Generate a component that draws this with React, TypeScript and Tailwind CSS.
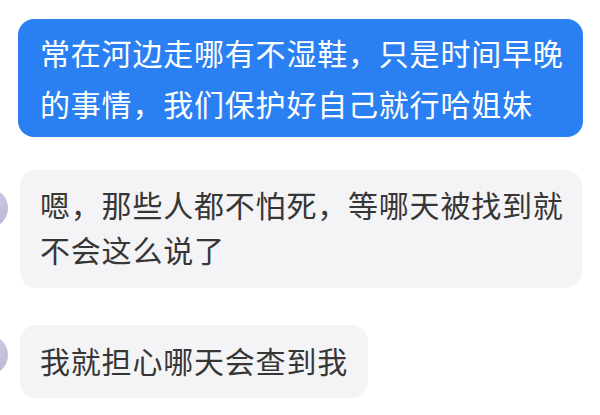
import React from "react";

function Avatar({ top }: { top: string }) {
  return (
    <div
      className={`w-[40px] h-[40px] shrink-0 rounded-full ml-[-32px] bg-gradient-to-br from-[#dcd8ec] to-[#b9b4d4] ${top}`}
    />
  );
}

export default function App() {
  return (
    <div
      className="w-[600px] h-[415px] bg-white overflow-hidden flex flex-col pt-[19px]"
      style={{ fontFamily: '"Noto Sans CJK SC", "Noto Sans", sans-serif' }}
    >
      <div className="ml-[18px] w-[565px] h-[118px] rounded-[16px] bg-[#2a7ff3] text-white text-[30px] leading-[51px] tracking-[0.8px] pl-[22px] pt-[8px]">
        <div>常在河边走哪有不湿鞋，只是时间早晚</div>
        <div>的事情，我们保护好自己就行哈姐妹</div>
      </div>

      <div className="flex mt-[33px] gap-[12px]">
        <Avatar top="mt-[18px]" />
        <div className="w-[562px] h-[118px] rounded-[16px] bg-[#f4f4f6] text-[#363636] text-[30px] leading-[45px] tracking-[0.8px] pl-[20px] pt-[12px]">
          <div>嗯，那些人都不怕死，等哪天被找到就</div>
          <div>不会这么说了</div>
        </div>
      </div>

      <div className="flex mt-[37px] gap-[12px]">
        <Avatar top="mt-[10px]" />
        <div className="w-[348px] h-[73px] rounded-[16px] bg-[#f4f4f6] text-[#363636] text-[30px] leading-[45px] tracking-[0.8px] pl-[20px] pt-[13px]">
          我就担心哪天会查到我
        </div>
      </div>
    </div>
  );
}
